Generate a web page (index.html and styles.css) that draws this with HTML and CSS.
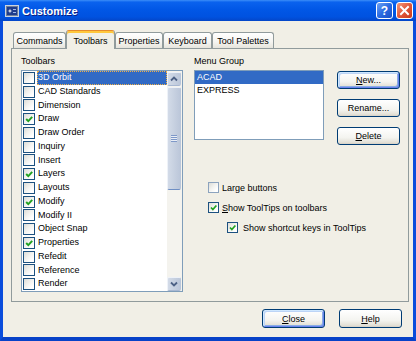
FILE: index.html
```html
<!DOCTYPE html>
<html>
<head>
<meta charset="utf-8">
<title>Customize</title>
<link rel="stylesheet" href="styles.css">
</head>
<body>
<div class="window">
  <div class="titlebar">
    <svg class="app-icon" width="14" height="12" viewBox="0 0 14 12">
      <rect x="0.5" y="0.5" width="13" height="11" fill="#6F7F98" stroke="#C9D3E2"/>
      <rect x="2" y="2" width="10" height="8" fill="#1E3C8C"/>
      <path d="M5 3.5 L5.6 5.4 L7.5 6 L5.6 6.6 L5 8.5 L4.4 6.6 L2.5 6 L4.4 5.4 Z" fill="#FFFFFF"/>
      <rect x="8" y="4" width="3" height="1" fill="#9FB6E6"/>
      <rect x="8" y="7" width="3" height="1" fill="#9FB6E6"/>
    </svg>
    <span class="title">Customize</span>
    <div class="cap-btn cap-help">?</div>
    <div class="cap-btn cap-close">
      <svg width="15" height="15" viewBox="0 0 15 15"><path d="M4 4 L11 11 M11 4 L4 11" stroke="#FFFFFF" stroke-width="2" stroke-linecap="square"/></svg>
    </div>
  </div>
  <div class="frame">
    <div class="tabs">
      <div class="tab tab-w1">Commands</div>
      <div class="tab tab-active tab-w2">Toolbars</div>
      <div class="tab tab-w3">Properties</div>
      <div class="tab tab-w4">Keyboard</div>
      <div class="tab tab-w5">Tool Palettes</div>
    </div>
    <div class="panel">
      <div class="col-toolbars">
        <div class="label">Toolbars</div>
        <div class="listbox">
          <div class="items">
            <div class="row"><span class="cb"></span><span class="item-text selected">3D Orbit</span></div>
            <div class="row"><span class="cb"></span><span class="item-text">CAD Standards</span></div>
            <div class="row"><span class="cb"></span><span class="item-text">Dimension</span></div>
            <div class="row"><span class="cb"><svg viewBox="0 0 10 10"><path d="M2.2 5 L4.3 7.2 L8.2 2.8" fill="none" stroke="#21A121" stroke-width="1.9"/></svg></span><span class="item-text">Draw</span></div>
            <div class="row"><span class="cb"></span><span class="item-text">Draw Order</span></div>
            <div class="row"><span class="cb"></span><span class="item-text">Inquiry</span></div>
            <div class="row"><span class="cb"></span><span class="item-text">Insert</span></div>
            <div class="row"><span class="cb"><svg viewBox="0 0 10 10"><path d="M2.2 5 L4.3 7.2 L8.2 2.8" fill="none" stroke="#21A121" stroke-width="1.9"/></svg></span><span class="item-text">Layers</span></div>
            <div class="row"><span class="cb"></span><span class="item-text">Layouts</span></div>
            <div class="row"><span class="cb"><svg viewBox="0 0 10 10"><path d="M2.2 5 L4.3 7.2 L8.2 2.8" fill="none" stroke="#21A121" stroke-width="1.9"/></svg></span><span class="item-text">Modify</span></div>
            <div class="row"><span class="cb"></span><span class="item-text">Modify II</span></div>
            <div class="row"><span class="cb"></span><span class="item-text">Object Snap</span></div>
            <div class="row"><span class="cb"><svg viewBox="0 0 10 10"><path d="M2.2 5 L4.3 7.2 L8.2 2.8" fill="none" stroke="#21A121" stroke-width="1.9"/></svg></span><span class="item-text">Properties</span></div>
            <div class="row"><span class="cb"></span><span class="item-text">Refedit</span></div>
            <div class="row"><span class="cb"></span><span class="item-text">Reference</span></div>
            <div class="row"><span class="cb"></span><span class="item-text">Render</span></div>
          </div>
          <div class="scrollbar">
            <div class="sb-btn"><svg width="12" height="12" viewBox="0 0 12 12"><path d="M3 7.5 L6 4.5 L9 7.5" fill="none" stroke="#4D6185" stroke-width="1.8"/></svg></div>
            <div class="sb-thumb"><span class="grip"></span></div>
            <div class="sb-track"></div>
            <div class="sb-btn"><svg width="12" height="12" viewBox="0 0 12 12"><path d="M3 4.5 L6 7.5 L9 4.5" fill="none" stroke="#4D6185" stroke-width="1.8"/></svg></div>
          </div>
        </div>
      </div>
      <div class="col-right">
        <div class="top-row">
          <div class="col-menu">
            <div class="label">Menu Group</div>
            <div class="menulist">
              <div class="menu-row selected">ACAD</div>
              <div class="menu-row">EXPRESS</div>
            </div>
          </div>
          <div class="col-buttons">
            <div class="btn btn-default"><u>N</u>ew...</div>
            <div class="btn">Rename...</div>
            <div class="btn"><u>D</u>elete</div>
          </div>
        </div>
        <div class="options">
          <div class="opt"><span class="cb cb-small cb-plain"></span><span>Large buttons</span></div>
          <div class="opt"><span class="cb cb-small"><svg viewBox="0 0 10 10"><path d="M2.2 5 L4.3 7.2 L8.2 2.8" fill="none" stroke="#21A121" stroke-width="1.9"/></svg></span><span><u>S</u>how ToolTips on toolbars</span></div>
          <div class="opt opt-indent"><span class="cb cb-small"><svg viewBox="0 0 10 10"><path d="M2.2 5 L4.3 7.2 L8.2 2.8" fill="none" stroke="#21A121" stroke-width="1.9"/></svg></span><span>Show shortcut keys in ToolTips</span></div>
        </div>
      </div>
    </div>
    <div class="footer">
      <div class="btn btn-footer btn-default"><u>C</u>lose</div>
      <div class="btn btn-footer"><u>H</u>elp</div>
    </div>
  </div>
</div>
</body>
</html>
```
FILE: styles.css
```css
html, body {
  margin: 0;
  padding: 0;
}
body {
  width: 416px;
  height: 341px;
  overflow: hidden;
  font-family: "Liberation Sans", Arial, sans-serif;
  font-size: 9px;
  color: #000;
  background: #F1EFE6;
}
u { text-decoration: underline; text-underline-offset: 1px; }

.window {
  width: 416px;
  height: 341px;
  display: flex;
  flex-direction: column;
}

/* title bar */
.titlebar {
  height: 21px;
  flex: none;
  display: flex;
  align-items: center;
  padding: 0 3px 0 5px;
  background: linear-gradient(180deg, #3C8EF8 0%, #0A62EE 10%, #0157E6 45%, #0052E0 80%, #0446C8 100%);
}
.app-icon { flex: none; margin-right: 3px; }
.title {
  flex: 1;
  color: #FFFFFF;
  font-weight: bold;
  font-size: 11px;
  text-shadow: 1px 1px 0 #0A1F86;
  padding-top: 1px;
}
.cap-btn {
  width: 17px;
  height: 17px;
  box-sizing: border-box;
  border: 1px solid #FFFFFF;
  border-radius: 3px;
  display: flex;
  align-items: center;
  justify-content: center;
  margin-left: 3px;
}
.cap-help {
  background: linear-gradient(135deg, #6FA2F4 0%, #2A6AE2 50%, #1A4FC6 100%);
  color: #FFFFFF;
  font-weight: bold;
  font-size: 12px;
}
.cap-close {
  background: linear-gradient(135deg, #F49A7C 0%, #E2573A 50%, #C83A1C 100%);
}

/* frame */
.frame {
  flex: 1;
  border-left: 3px solid #0A4DDC;
  border-right: 3px solid #0A4DDC;
  border-bottom: 4px solid #0842C8;
  padding: 9px 0 0 8px;
  background: #F1EFE6;
  display: flex;
  flex-direction: column;
}

/* tabs */
.tabs {
  display: flex;
  align-items: flex-end;
  height: 19px;
  margin: 0 0 -1px 2px;
  position: relative;
  z-index: 1;
}
.tab {
  box-sizing: border-box;
  height: 16px;
  margin-bottom: 1px;
  border: 1px solid #919B9C;
  border-bottom: none;
  border-radius: 3px 3px 0 0;
  background: linear-gradient(180deg, #FFFFFF 0%, #F5F4F0 60%, #E6E4DC 100%);
  display: flex;
  align-items: center;
  justify-content: center;
  white-space: nowrap;
}
.tab-active {
  height: 19px;
  margin-bottom: 0;
  background: #F1EFE6;
  border-top: 1px solid #E68B2C;
  box-shadow: inset 0 2px 0 #FFC83C;
  padding-top: 1px;
}
.tab-w1 { width: 53px; }
.tab-w2 { width: 49px; }
.tab-w3 { width: 48px; }
.tab-w4 { width: 49px; }
.tab-w5 { width: 62px; }

/* panel */
.panel {
  box-sizing: border-box;
  width: 398px;
  height: 254px;
  border: 1px solid #919B9C;
  background: #F1EFE6;
  padding: 7px 0 0 9px;
  display: flex;
}
.label {
  height: 11px;
  line-height: 11px;
  margin-bottom: 3px;
  white-space: nowrap;
}
.col-toolbars { width: 162px; flex: none; }
.listbox {
  box-sizing: border-box;
  height: 222px;
  border: 1px solid #7F9DB9;
  background: #FFFFFF;
  display: flex;
}
.items { flex: 1; }
.row {
  height: 13.75px;
  display: flex;
  align-items: center;
}
.cb {
  box-sizing: border-box;
  width: 12px;
  height: 12px;
  flex: none;
  border: 1px solid #1C5180;
  background: linear-gradient(135deg, #DCDCD7 0%, #F2F2EF 45%, #FFFFFF 80%);
  display: flex;
  align-items: center;
  justify-content: center;
}
.row .cb { margin: 0 2px 0 1px; }
.cb svg { width: 10px; height: 10px; display: block; }
.cb-small { width: 11px; height: 11px; }
.cb-small svg { width: 9px; height: 9px; }
.cb-plain { border-color: #8CA3BE; }
.item-text {
  flex: 1;
  height: 13.75px;
  line-height: 13.75px;
  padding-left: 1px;
  white-space: nowrap;
}
.selected {
  background: #316AC5;
  color: #FFFFFF;
  outline: 1px dotted #F0B048;
  outline-offset: -1px;
}

/* scrollbar */
.scrollbar {
  width: 14px;
  flex: none;
  padding: 1px 1px 0 0;
  display: flex;
  flex-direction: column;
  background: #F4F3EE;
}
.sb-btn, .sb-thumb {
  box-sizing: border-box;
  border: 1px solid #EEF2F8;
  border-bottom-color: #A8B8D2;
  border-right-color: #B9C6DA;
  border-radius: 2px;
  background: linear-gradient(90deg, #D3DBE8 0%, #C5CFDF 60%, #BCC7DA 100%);
}
.sb-btn {
  height: 14px;
  display: flex;
  align-items: center;
  justify-content: center;
}
.sb-thumb {
  height: 103px;
  margin-top: 1px;
  display: flex;
  align-items: center;
  justify-content: center;
  border-bottom: 1px solid #6F8FC4;
}
.grip {
  width: 6px;
  height: 7px;
  background: repeating-linear-gradient(180deg, #7E98C8 0 1px, #E9EEF6 1px 2px);
}
.sb-track { flex: 1; }

/* right side */
.col-right {
  margin-left: 11px;
  display: flex;
  flex-direction: column;
}
.top-row { display: flex; }
.col-menu { width: 130px; }
.menulist {
  box-sizing: border-box;
  height: 70px;
  border: 1px solid #7F9DB9;
  background: #FFFFFF;
}
.menu-row {
  height: 13px;
  line-height: 13px;
  padding-left: 2px;
  white-space: nowrap;
}
.menulist .selected { outline: none; }
.col-buttons {
  width: 63px;
  margin-left: 13px;
  padding-top: 15px;
  display: flex;
  flex-direction: column;
  gap: 10px;
}
.btn {
  box-sizing: border-box;
  width: 63px;
  height: 18px;
  border: 1px solid #003C74;
  border-radius: 3px;
  background: linear-gradient(180deg, #FFFFFF 0%, #F4F4F0 60%, #E3E0D6 90%, #D6D0C5 100%);
  display: flex;
  align-items: center;
  justify-content: center;
  white-space: nowrap;
}
.btn-default {
  box-shadow: inset 1px 1px 0 #CEE7FF, inset -1px -1px 0 #6982EE, inset 2px 2px 0 #BCD4F6, inset -2px -2px 0 #89ADE4;
}
.options {
  margin-top: 36px;
  display: flex;
  flex-direction: column;
  gap: 7px;
}
.opt {
  height: 13px;
  display: flex;
  align-items: center;
  gap: 3px;
  padding-left: 14px;
  white-space: nowrap;
}
.opt-indent { padding-left: 33px; gap: 5px; }

/* footer */
.footer {
  margin-top: 7px;
  padding-right: 11px;
  display: flex;
  justify-content: flex-end;
  gap: 14px;
}
.btn-footer { height: 19px; }
```
